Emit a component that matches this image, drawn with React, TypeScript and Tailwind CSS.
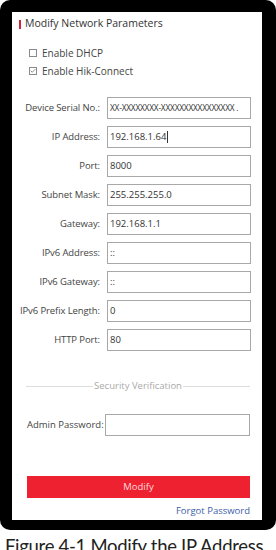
import { Check } from "lucide-react";

const ROWS: { label: string; value: string; cursor?: boolean; small?: boolean }[] = [
  { label: "Device Serial No.:", value: "XX-XXXXXXXX-XXXXXXXXXXXXXXXX .", small: true },
  { label: "IP Address:", value: "192.168.1.64", cursor: true },
  { label: "Port:", value: "8000" },
  { label: "Subnet Mask:", value: "255.255.255.0" },
  { label: "Gateway:", value: "192.168.1.1" },
  { label: "IPv6 Address:", value: "::" },
  { label: "IPv6 Gateway:", value: "::" },
  { label: "IPv6 Prefix Length:", value: "0" },
  { label: "HTTP Port:", value: "80" },
];

function CheckRow({ label, checked }: { label: string; checked: boolean }) {
  return (
    <div className="flex h-[18px] items-center gap-[5px]">
      <span className="flex h-[8px] w-[8px] items-center justify-center border border-[#8a8a8a] bg-white">
        {checked && <Check size={8} strokeWidth={2.5} className="text-[#444]" />}
      </span>
      <span className="text-[10px] text-[#444]">{label}</span>
    </div>
  );
}

export default function App() {
  return (
    <div
      className="flex h-[550px] w-[276px] flex-col overflow-hidden bg-white"
      style={{ fontFamily: '"Open Sans", "Noto Sans", sans-serif' }}
    >
      {/* device frame */}
      <div className="h-[530px] shrink-0 rounded-[10px] bg-black pb-[10px] pl-[12px] pr-[14px] pt-[12px]">
        <div className="flex h-full flex-col bg-white">
          {/* Heading */}
          <div className="flex h-[21px] items-center gap-[4px] pl-[7px] pt-[3px]">
            <span className="h-[9px] w-[2px] bg-[#d2233c]" />
            <span className="text-[10.5px] text-[#333]">Modify Network Parameters</span>
          </div>

          <div className="mt-[11px] flex flex-col pl-[17px]">
            <CheckRow label="Enable DHCP" checked={false} />
            <CheckRow label="Enable Hik-Connect" checked />
          </div>

          {/* Parameter rows */}
          <div className="mt-[17px] flex flex-col gap-[7px]">
            {ROWS.map((row) => (
              <div key={row.label} className="flex items-center gap-[7px]">
                <label className="w-[88px] text-right text-[9.5px] font-medium tracking-[-0.1px] text-[#444]">
                  {row.label}
                </label>
                <div
                  className={`flex h-[22px] w-[144px] items-center overflow-hidden whitespace-nowrap border border-[#a8a8a8] px-[2px] text-[#333] ${
                    row.small ? "text-[8.3px] tracking-[-0.2px]" : "text-[9.5px]"
                  }`}
                >
                  {row.value}
                  {row.cursor && <span className="ml-[1px] h-[12px] w-px bg-[#333]" />}
                </div>
              </div>
            ))}
          </div>

          {/* Security Verification divider */}
          <div className="mt-[28px] flex items-center pl-[14px] pr-[12px]">
            <span className="h-px flex-1 bg-[#ddd]" />
            <span className="px-[1px] text-[9.5px] text-[#aaa]">Security Verification</span>
            <span className="h-px flex-1 bg-[#ddd]" />
          </div>

          <div className="mt-[21px] flex items-center justify-between pl-[15px] pr-[12px]">
            <span className="text-[9.5px] font-medium text-[#444]">Admin Password:</span>
            <div className="h-[22px] w-[145px] border border-[#a8a8a8]" />
          </div>

          <button
            type="button"
            className="ml-[15px] mr-[12px] mt-[40px] flex h-[22px] items-center justify-center bg-[#ee2130] text-[9.5px] text-[#ffd9dc]"
          >
            Modify
          </button>

          <div className="mt-[6px] pr-[12px] text-right text-[9.5px] text-[#3b5ea8]">
            Forgot Password
          </div>
        </div>
      </div>

      {/* Caption, cut off by the bottom edge */}
      <div
        className="mt-[4px] whitespace-nowrap pl-[5px] text-[18.5px] leading-[24px] tracking-[-0.3px] text-[#222]"
        style={{ fontFamily: "Lato, sans-serif" }}
      >
        Figure 4-1 Modify the IP Address
      </div>
    </div>
  );
}
